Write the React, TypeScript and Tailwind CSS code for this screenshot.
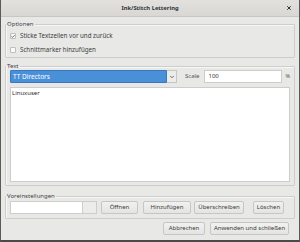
import { Check, ChevronDown, X } from 'lucide-react';
import type { ReactNode } from 'react';

function Frame({ label, className, children }: { label: string; className?: string; children: ReactNode }) {
  return (
    <fieldset
      className={`mx-[4px] rounded-[1px] border border-[#cdcdcb] px-[4px] shadow-[inset_1px_1px_0_#f7f7f6] ${className ?? ''}`}
    >
      <legend className="-ml-[4px] px-[1px] text-[6px] leading-[7px] text-[#3c3c3c]">{label}</legend>
      {children}
    </fieldset>
  );
}

function Button({ children, className }: { children: ReactNode; className?: string }) {
  return (
    <button
      className={`flex h-[13px] items-center justify-center rounded-[2px] border border-[#c6c6c4] bg-gradient-to-b from-[#f1f1f0] to-[#e4e4e2] text-[6px] text-[#3c3c3c] ${className ?? ''}`}
    >
      {children}
    </button>
  );
}

function CheckRow({ checked, label }: { checked: boolean; label: string }) {
  return (
    <div className="flex h-[14px] items-center gap-[4px]">
      <span className="flex h-[6px] w-[6px] items-center justify-center rounded-[1px] border border-[#bdbdbb] bg-[#fafafa]">
        {checked && <Check className="h-[7px] w-[7px] text-[#2e2e2e]" strokeWidth={4} />}
      </span>
      <span className="text-[6.2px] text-[#3c3c3c]">{label}</span>
    </div>
  );
}

export default function App() {
  return (
    <div
      className="flex h-[242px] w-[300px] flex-col border-x border-b-2 border-x-[#5a5a5a] border-b-[#4a4a4a] bg-[#e8e8e7]"
      style={{ fontFamily: '"Noto Sans", "DejaVu Sans", sans-serif' }}
    >
      {/* title bar */}
      <div className="relative flex h-[17px] shrink-0 items-center justify-center border-b border-[#c9c7c3] bg-gradient-to-b from-[#e3e1dd] to-[#d9d7d3]">
        <span className="text-[5.8px] font-bold text-[#2e3436]">Ink/Stitch Lettering</span>
        <X className="absolute right-[7px] top-[5px] h-[6px] w-[6px] text-[#2e3436]" strokeWidth={4} />
      </div>

      <Frame label="Optionen" className="mt-[4px] h-[37px] pt-[1px]">
        <CheckRow checked label="Sticke Textzeilen vor und zurück" />
        <CheckRow checked={false} label="Schnittmarker hinzufügen" />
      </Frame>

      <Frame label="Text" className="mt-[5px] h-[123px]">
        <div className="flex h-[13px] items-center">
          <div className="flex h-[13px] w-[157px] items-center rounded-l-[1px] border border-[#3b78c2] bg-[#4a90d9] pl-[2px] text-[6.5px] text-white">
            TT Directors
          </div>
          <div className="flex h-[13px] w-[10px] items-center justify-center border border-l-0 border-[#c6c6c4] bg-[#ececeb]">
            <ChevronDown className="h-[6px] w-[6px] text-[#444]" strokeWidth={3} />
          </div>
          <span className="ml-[8px] text-[6px] text-[#555]">Scale</span>
          <div className="ml-[5px] flex h-[13px] w-[78px] items-center border border-[#cdcdcb] bg-white pl-[3px] text-[6px] text-[#333]">
            100
          </div>
          <span className="ml-[3px] text-[5.5px] text-[#555]">%</span>
        </div>
        <div className="mt-[4px] h-[95px] border border-[#cdcdcb] bg-white px-[1px] pt-[1px] text-[6px] text-[#2e2e2e]">
          Linuxuser
        </div>
      </Frame>

      <Frame label="Voreinstellungen" className="mt-[7px] h-[26px]">
        <div className="flex items-center pt-[1px]">
          <div className="h-[13px] w-[73px] border border-[#cdcdcb] bg-white" />
          <div className="h-[13px] w-[14px] border border-l-0 border-[#cdcdcb] bg-[#ececeb]" />
          <Button className="ml-[4px] w-[37px]">Öffnen</Button>
          <Button className="ml-[5px] w-[48px]">Hinzufügen</Button>
          <Button className="ml-[3px] w-[50px]">Überschreiben</Button>
          <Button className="ml-[9px] w-[31px]">Löschen</Button>
        </div>
      </Frame>

      <div className="mt-[3px] flex justify-end gap-[5px] pr-[10px]">
        <Button className="w-[42px]">Abbrechen</Button>
        <Button className="w-[79px]">Anwenden und schließen</Button>
      </div>
    </div>
  );
}
